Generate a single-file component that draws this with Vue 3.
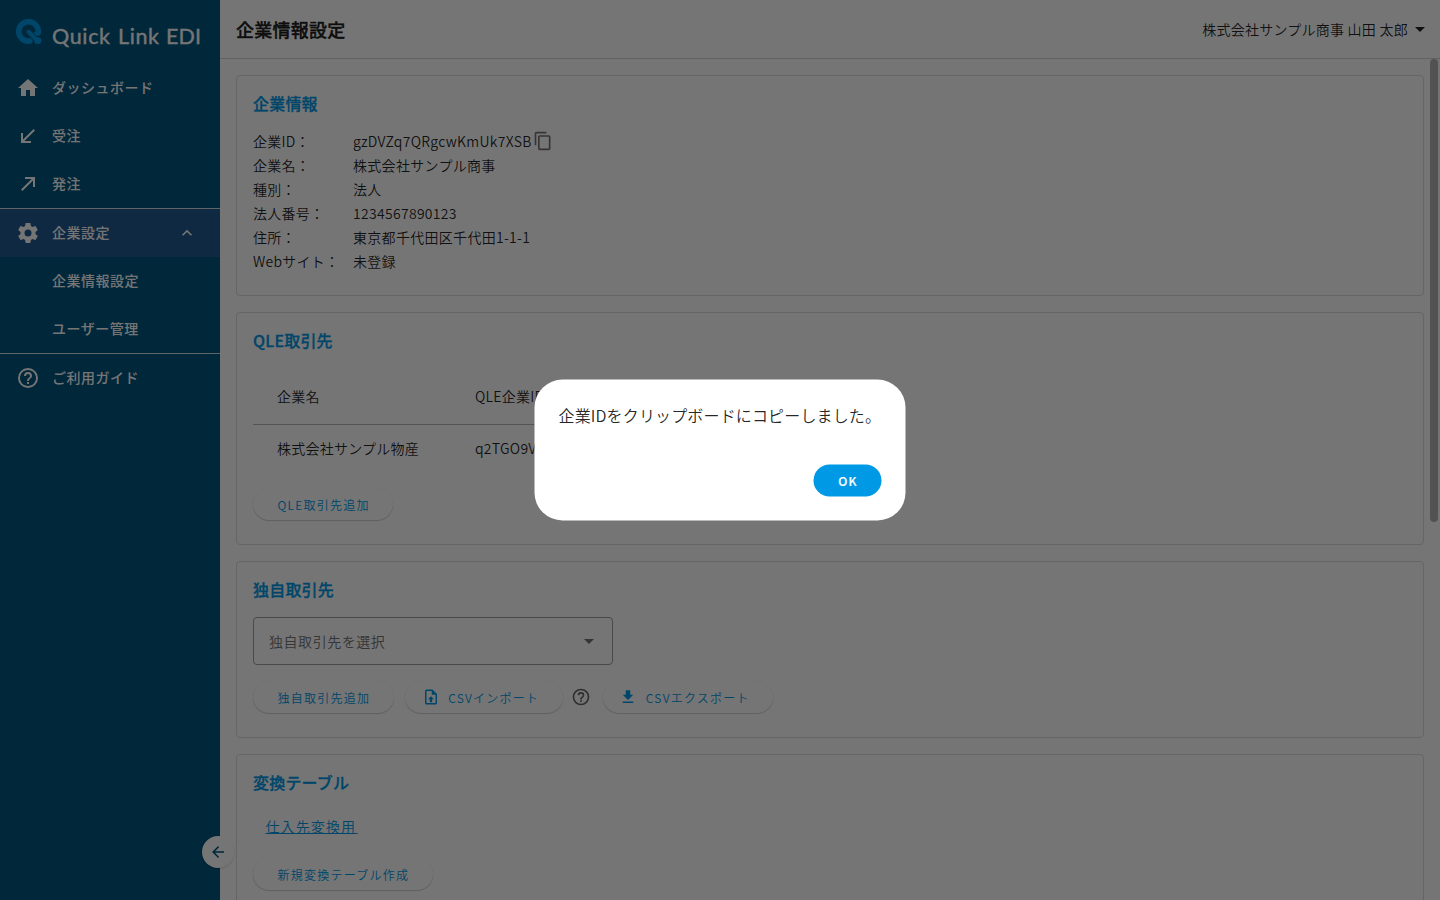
<script setup>
const info = [
  ['企業ID：', 'gzDVZq7QRgcwKmUk7XSB', true],
  ['企業名：', '株式会社サンプル商事'],
  ['種別：', '法人'],
  ['法人番号：', '1234567890123'],
  ['住所：', '東京都千代田区千代田1-1-1'],
  ['Webサイト：', '未登録'],
]
const icons = {
  home: 'M10,20V14H14V20H19V12H22L12,3L2,12H5V20H10Z',
  inn: 'M19,6.41L17.59,5L7,15.59V9H5V19H15V17H8.41L19,6.41Z',
  out: 'M5,17.59L15.59,7H9V5H19V15H17V8.41L6.41,19L5,17.59Z',
  cog: 'M12,15.5A3.5,3.5 0 0,1 8.5,12A3.5,3.5 0 0,1 12,8.5A3.5,3.5 0 0,1 15.5,12A3.5,3.5 0 0,1 12,15.5M19.43,12.97C19.47,12.65 19.5,12.33 19.5,12C19.5,11.67 19.47,11.34 19.43,11L21.54,9.37C21.73,9.22 21.78,8.95 21.66,8.73L19.66,5.27C19.54,5.05 19.27,4.96 19.05,5.05L16.56,6.05C16.04,5.66 15.5,5.32 14.87,5.07L14.5,2.42C14.46,2.18 14.25,2 14,2H10C9.75,2 9.54,2.18 9.5,2.42L9.13,5.07C8.5,5.32 7.96,5.66 7.44,6.05L4.95,5.05C4.73,4.96 4.46,5.05 4.34,5.27L2.34,8.73C2.21,8.95 2.27,9.22 2.46,9.37L4.57,11C4.53,11.34 4.5,11.67 4.5,12C4.5,12.33 4.53,12.65 4.57,12.97L2.46,14.63C2.27,14.78 2.21,15.05 2.34,15.27L4.34,18.73C4.46,18.95 4.73,19.03 4.95,18.95L7.44,17.94C7.96,18.34 8.5,18.68 9.13,18.93L9.5,21.58C9.54,21.82 9.75,22 10,22H14C14.25,22 14.46,21.82 14.5,21.58L14.87,18.93C15.5,18.67 16.04,18.34 16.56,17.94L19.05,18.95C19.27,19.03 19.54,18.95 19.66,18.73L21.66,15.27C21.78,15.05 21.73,14.78 21.54,14.63L19.43,12.97Z',
  up: 'M7.41,15.41L12,10.83L16.59,15.41L18,14L12,8L6,14L7.41,15.41Z',
  help: 'M11,18H13V16H11V18M12,2A10,10 0 0,0 2,12A10,10 0 0,0 12,22A10,10 0 0,0 22,12A10,10 0 0,0 12,2M12,20C7.59,20 4,16.41 4,12C4,7.59 7.59,4 12,4C16.41,4 20,7.59 20,12C20,16.41 16.41,20 12,20M12,6A4,4 0 0,0 8,10H10A2,2 0 0,1 12,8A2,2 0 0,1 14,10C14,12 11,11.75 11,15H13C13,12.75 16,12.5 16,10A4,4 0 0,0 12,6Z',
  copy: 'M19,21H8V7H19M19,5H8A2,2 0 0,0 6,7V21A2,2 0 0,0 8,23H19A2,2 0 0,0 21,21V7A2,2 0 0,0 19,5M16,1H4A2,2 0 0,0 2,3V17H4V3H16V1Z',
  down: 'M7,10L12,15L17,10H7Z',
  left: 'M20,11V13H8L13.5,18.5L12.08,19.92L4.16,12L12.08,4.08L13.5,5.5L8,11H20Z',
  upload: 'M14,2H6A2,2 0 0,0 4,4V20A2,2 0 0,0 6,22H18A2,2 0 0,0 20,20V8L14,2M18,20H6V4H13V9H18V20M12,11L8,15H10.5V19H13.5V15H16L12,11Z',
  download: 'M5,20H19V18H5M19,9H15V3H9V9H5L12,16L19,9Z',
}
</script>

<template>
  <div class="app">
    <aside class="side">
      <div class="brand">
        <svg class="mark" viewBox="0 0 26 26">
          <path class="ring" d="M22.3 12.9A9.8 9.8 0 1 0 12.5 22.2" />
          <path class="tail" d="M12.6 13L19.5 19.8" />
          <path d="M19 12.5H25.2C25.2 15.6 24.2 16.8 22 16.8C20.2 16.8 19 15.6 17.6 13.8Z M11.5 19.2C13.4 18.6 14.6 18.8 16.6 21V22.5C16.6 24.5 15 25.1 12 25.1Z" />
          <rect x="18.2" y="18.4" width="7.2" height="6.7" rx="3" />
        </svg>
        <svg class="word" viewBox="0 0 152 26">
          <text x="0" y="19" textLength="58">Quick</text>
          <text x="66" y="19" textLength="41">Link</text>
          <text x="114" y="19" textLength="35">EDI</text>
        </svg>
      </div>
      <div class="item"><svg class="i24" viewBox="0 0 24 24"><path :d="icons.home" /></svg><span>ダッシュボード</span></div>
      <div class="item"><svg class="i24" viewBox="0 0 24 24"><path :d="icons.inn" /></svg><span>受注</span></div>
      <div class="item"><svg class="i24" viewBox="0 0 24 24"><path :d="icons.out" /></svg><span>発注</span></div>
      <div class="line"></div>
      <div class="item active"><svg class="i24" viewBox="0 0 24 24"><path :d="icons.cog" /></svg><span>企業設定</span><svg class="chev" viewBox="0 0 24 24"><path :d="icons.up" /></svg></div>
      <div class="item sub"><span>企業情報設定</span></div>
      <div class="item sub"><span>ユーザー管理</span></div>
      <div class="line"></div>
      <div class="item"><svg class="i24" viewBox="0 0 24 24"><path :d="icons.help" /></svg><span>ご利用ガイド</span></div>
      <div class="fold"><svg viewBox="0 0 24 24"><path :d="icons.left" /></svg></div>
    </aside>

    <main class="main">
      <header class="head">
        <h1>企業情報設定</h1>
        <div class="user"><span>株式会社サンプル商事 山田 太郎</span><svg viewBox="0 0 24 24"><path :d="icons.down" /></svg></div>
      </header>
      <div class="body">
        <section class="card c1">
          <h2>企業情報</h2>
          <div class="rows">
            <div v-for="r in info" :key="r[0]" class="row">
              <span class="key">{{ r[0] }}</span><span class="val">{{ r[1] }}</span>
              <svg v-if="r[2]" class="copy" viewBox="0 0 24 24"><path :d="icons.copy" /></svg>
            </div>
          </div>
        </section>
        <section class="card c2">
          <h2>QLE取引先</h2>
          <div class="table">
            <div class="tr th"><span>企業名</span><span>QLE企業ID</span></div>
            <div class="tr"><span>株式会社サンプル物産</span><span>q2TGO9V</span></div>
          </div>
          <div class="btns"><button class="btn">QLE取引先追加</button></div>
        </section>
        <section class="card c3">
          <h2>独自取引先</h2>
          <div class="select"><span>独自取引先を選択</span><svg viewBox="0 0 24 24"><path :d="icons.down" /></svg></div>
          <div class="btns">
            <button class="btn">独自取引先追加</button>
            <button class="btn ic gap"><svg viewBox="0 0 24 24"><path :d="icons.upload" /></svg><span>CSVインポート</span></button>
            <svg class="q" viewBox="0 0 24 24"><path :d="icons.help" /></svg>
            <button class="btn ic last"><svg viewBox="0 0 24 24"><path :d="icons.download" /></svg><span>CSVエクスポート</span></button>
          </div>
        </section>
        <section class="card c4">
          <h2>変換テーブル</h2>
          <a class="link">仕入先変換用</a>
          <div class="btns"><button class="btn">新規変換テーブル作成</button></div>
        </section>
      </div>
      <div class="thumb"></div>
    </main>

    <div class="scrim">
      <div class="dialog">
        <p>企業IDをクリップボードにコピーしました。</p>
        <button class="ok">OK</button>
      </div>
    </div>
  </div>
</template>

<style>
body { margin: 0; overflow: hidden; }
</style>

<style scoped>
.app { position: relative; display: flex; width: 1440px; height: 900px; overflow: hidden; background: #fff; color: rgba(0,0,0,.87); font: 350 14px/24px "Noto Sans CJK JP", "Noto Sans", sans-serif; letter-spacing: .25px; }
svg { fill: currentColor; flex: none; display: block; }
.app * { box-sizing: border-box; }
.side { position: relative; z-index: 1; width: 220px; flex: none; background: #00557e; color: #fff; }
.brand { height: 64px; padding: 19px 0 0 16px; display: flex; }
.mark { width: 26px; height: 26px; fill: #0099e6; }
.ring { fill: none; stroke: #0099e6; stroke-width: 5.6; }
.tail { fill: none; stroke: #0099e6; stroke-width: 4.4; stroke-linecap: round; }
.word { width: 152px; height: 26px; margin: 6px 0 0 10px; overflow: visible; }
.word text { font: 400 21.5px Lato, sans-serif; letter-spacing: 0; stroke: #fff; stroke-width: .35px; }
.item { height: 48px; display: flex; align-items: center; padding-left: 16px; font-weight: 500; letter-spacing: .5px; }
.item span { margin: -2px 0 0 12px; }
.i24 { width: 24px; height: 24px; }
.item.sub { padding-left: 40px; }
.line { height: 1px; background: #fff; opacity: .8; }
.active { background: #235b90; }
.chev { width: 20px; height: 20px; margin-left: auto; margin-right: 23.5px; }
.fold { position: absolute; left: 202px; top: 836px; width: 32px; height: 32px; border-radius: 50%; background: #fff; color: #00557e; display: flex; align-items: center; justify-content: center; box-shadow: 0 1px 2px rgba(0,0,0,.16); }
.fold svg { width: 18px; height: 18px; }
.main { position: relative; flex: 1; height: 900px; overflow: hidden; }
.head { height: 59px; border-bottom: 1px solid #d4d4d4; display: flex; justify-content: space-between; align-items: center; padding: 0 8px 0 16px; }
h1 { margin: 0; font-size: 18px; font-weight: 500; line-height: 28px; letter-spacing: .25px; -webkit-text-stroke: .4px currentColor; }
.user { display: flex; align-items: center; }
.user span { margin-top: -1px; }
.user svg { width: 24px; height: 24px; }
.body { padding: 16px; }
.card { border: 1px solid #dcdcdc; border-radius: 4px; padding: 15px 16px 16px; margin-bottom: 16px; width: 1188px; }
h2 { margin: 0; font-size: 16px; line-height: 24px; font-weight: 500; letter-spacing: .2px; color: #0099e6; -webkit-text-stroke: .3px #0099e6; }
.c1 { height: 221px; }
.c2 { height: 233px; }
.c3 { height: 177px; }
.c4 { height: 220px; }
.rows { margin-top: 14px; }
.row { display: flex; height: 24px; }
.key { width: 100px; }
.val { letter-spacing: .3px; }
.copy { width: 20px; height: 20px; margin-left: 1px; margin-top: 2px; fill: #757575; }
.table { margin-top: 17px; width: 500px; }
.tr { display: flex; height: 48px; line-height: 46px; padding-left: 24px; }
.th { height: 56px; line-height: 54px; border-bottom: 1px solid #b8b8b8; }
.tr span:first-child { width: 198px; }
.btns { display: flex; align-items: center; }
.btn { font: 350 12px/32px "Noto Sans CJK JP", sans-serif; letter-spacing: 1.25px; height: 32px; padding: 2px 23.6px 0 24.4px; border: 0; border-radius: 16px; background: transparent; color: #0099e6; display: flex; align-items: center; white-space: nowrap; box-shadow: 0 1px 1px rgba(0,0,0,.18), 0 0 1px rgba(0,0,0,.1); }
.c2 .btns { margin-top: 15px; }
.select { width: 360px; height: 48px; margin-top: 16px; border: 1px solid #a0a0a0; border-radius: 4px; padding: 0 11px 0 15px; display: flex; align-items: center; justify-content: space-between; color: #737373; letter-spacing: .55px; }
.select svg { width: 24px; height: 24px; }
.c3 .btns { margin-top: 16px; }
.btn.ic { padding-left: 17px; }
.ic svg { width: 18px; height: 18px; margin-right: 8.4px; margin-top: -3px; }
.btn.ic.last { padding-left: 16px; }
.last svg { margin-right: 8.8px; }
.gap { margin-left: 11px; }
.q { width: 20px; height: 20px; margin: 0 12px 0 8px; color: #666; }
.link { display: block; width: 92px; height: 20px; line-height: 24px; margin: 20px 0 0 12.5px; color: #0099e6; text-decoration: underline; letter-spacing: 1.1px; border-bottom: 1px solid #9a9a9a; }
.c4 .btns { margin-top: 24px; }
.thumb { position: absolute; right: 2px; top: 59px; width: 8px; height: 463px; border-radius: 4px; background: #b4b4b4; }
.scrim { position: absolute; inset: 0; z-index: 5; background: rgba(0,0,0,.54); display: flex; align-items: center; justify-content: center; }
.dialog { width: 371px; height: 141px; background: #fff; border-radius: 28px; padding: 23px 23.5px 24px 24.5px; display: flex; flex-direction: column; justify-content: space-between; align-items: flex-end; transform: translate(-.5px, -.5px); }
p { margin: 0; width: 100%; font-size: 16px; line-height: 24px; letter-spacing: .15px; white-space: nowrap; }
.ok { width: 68px; height: 32px; border: 0; border-radius: 16px; background: #0099e6; color: #fff; font: 500 12px/32px "Noto Sans CJK JP", sans-serif; letter-spacing: 1.25px; padding: 0 0 0 1px; -webkit-text-stroke: .2px #fff; }
</style>
